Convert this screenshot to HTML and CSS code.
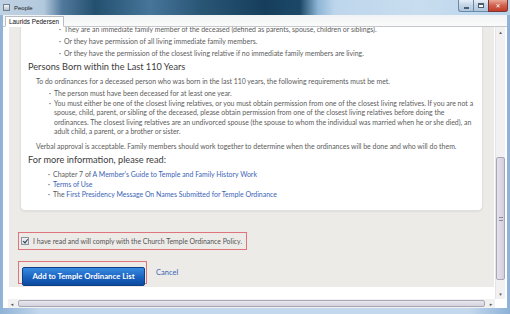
FILE: index.html
```html
<!DOCTYPE html>
<html lang="en">
<head>
    <meta charset="UTF-8">
    <title>People</title>
    <link rel="stylesheet" href="styles.css">
</head>
<body>
<div class="window">
    <div class="titlebar">
        <span class="app-icon"></span>
        <span class="title">People</span>
        <div class="controls">
            <span class="ctl min"><i></i></span>
            <span class="ctl max"><i></i></span>
            <span class="ctl close">&#x2715;</span>
        </div>
    </div>
    <div class="frame">
        <div class="client">
            <div class="tabs">
                <div class="tab">Laurids Pedersen</div>
            </div>
            <div class="viewport">
                <div class="view-row">
                    <div class="view">
                        <div class="page">
                            <div class="card">
                                <ul class="sub-list">
                                    <li>They are an immediate family member of the deceased (defined as parents, spouse, children or siblings).</li>
                                    <li>Or they have permission of all living immediate family members.</li>
                                    <li>Or they have the permission of the closest living relative if no immediate family members are living.</li>
                                </ul>
                                <h3>Persons Born within the Last 110 Years</h3>
                                <p>To do ordinances for a deceased person who was born in the last 110 years, the following requirements must be met.</p>
                                <ul class="rules">
                                    <li>The person must have been deceased for at least one year.</li>
                                    <li>You must either be one of the closest living relatives, or you must obtain permission from one of the closest living relatives. If you are not a spouse, child, parent, or sibling of the deceased, please obtain permission from one of the closest living relatives before doing the ordinances. The closest living relatives are an undivorced spouse (the spouse to whom the individual was married when he or she died), an adult child, a parent, or a brother or sister.</li>
                                </ul>
                                <p class="note">Verbal approval is acceptable. Family members should work together to determine when the ordinances will be done and who will do them.</p>
                                <h3>For more information, please read:</h3>
                                <ul class="links">
                                    <li>Chapter 7 of <a href="#">A Member's Guide to Temple and Family History Work</a></li>
                                    <li><a href="#">Terms of Use</a></li>
                                    <li>The <a href="#">First Presidency Message On Names Submitted for Temple Ordinance</a></li>
                                </ul>
                            </div>

                            <label class="agree marked">
                                <span class="checkbox checked"></span>
                                I have read and will comply with the Church Temple Ordinance Policy.
                            </label>

                            <div class="actions">
                                <div class="marked">
                                    <button class="primary">Add to Temple Ordinance List</button>
                                </div>
                                <a href="#" class="cancel">Cancel</a>
                            </div>
                        </div>
                    </div>
                    <div class="vscroll">
                        <span class="arrow">&#x25B4;</span>
                        <div class="track">
                            <div class="thumb"><i></i></div>
                        </div>
                        <span class="arrow">&#x25BE;</span>
                    </div>
                </div>
                <div class="hscroll">
                    <span class="arrow">&#x25C2;</span>
                    <div class="track">
                        <div class="thumb"></div>
                    </div>
                    <span class="arrow">&#x25B8;</span>
                </div>
            </div>
        </div>
    </div>
</div>
</body>
</html>
```

FILE: styles.css
```css
:root {
    --page-gray: #edebe8;
    --text: #5a5a5a;
    --heading: #3c3c3c;
    --link: #3a64b6;
    --mark: #e0747c;
    --glass: linear-gradient(to right, #c0d3e4 0, #b2c8dc 44px, #52799c 62px, #24506f 95px, #46759a 150px, #2a5676 200px, #163e5c 265px, #1c4868 300px, #8eb6d6 318px, #bed6ec 335px, #c8ddef 420px, #b9d3eb 510px);
}

* {
    box-sizing: border-box;
    margin: 0;
    padding: 0;
}

html,
body {
    background: #b9d0e8;
}

body {
    width: 510px;
    height: 314px;
    overflow: hidden;
    font-family: Lato, 'Liberation Sans', sans-serif;
    color: var(--text);
}

.window {
    width: 510px;
    height: 314px;
    display: flex;
    flex-direction: column;
    background: var(--glass) top left / 510px 15px no-repeat, #b9d0e8;
}

/* Aero title bar */
.titlebar {
    height: 15px;
    flex-shrink: 0;
    display: flex;
    align-items: center;
    padding-left: 3px;
    background-color: #2a5676;
    background-image: var(--glass);
}

.app-icon {
    width: 7px;
    height: 7px;
    border: 1px solid #6f7f8e;
    background: linear-gradient(#f4f6f8, #b8c2cc);
}

.title {
    margin-left: 4px;
    font-family: 'Liberation Sans', sans-serif;
    font-size: 6px;
    color: #1a1a1a;
}

.controls {
    margin-left: auto;
    margin-right: 2px;
    display: flex;
    align-self: flex-start;
}

.ctl {
    height: 12px;
    display: flex;
    align-items: center;
    justify-content: center;
    border: 1px solid #6a88a8;
    border-top: none;
}

.ctl.min,
.ctl.max {
    width: 15px;
    background: linear-gradient(#e6eef6, #c3d4e6 50%, #b0c6dc);
    border-right: none;
}

.ctl.min {
    border-bottom-left-radius: 3px;
}

.ctl.min i {
    width: 5px;
    height: 2px;
    margin-top: 4px;
    background: #f8f8f8;
    border: 1px solid #4d5d6e;
}

.ctl.max i {
    width: 6px;
    height: 5px;
    border: 1px solid #4d5d6e;
    border-top-width: 2px;
    background: #f8f8f8;
}

.ctl.close {
    width: 20px;
    border-color: #7a3530;
    border-bottom-right-radius: 3px;
    background: linear-gradient(#eaa898, #d0604c 50%, #c43c28);
    color: #fff;
    font-size: 6px;
    font-weight: bold;
    font-family: 'DejaVu Sans', sans-serif;
}

.frame {
    flex: 1;
    padding: 0 3px 6px;
    background: linear-gradient(to right, #8fb2d6, #c3d8ec 8%, #c3d8ec 92%, #8db1d8);
}

.client {
    height: 100%;
    display: flex;
    flex-direction: column;
    background: #fff;
}

.tabs {
    height: 12px;
    display: flex;
    align-items: flex-end;
    padding-left: 2px;
    background: linear-gradient(#f2f3f5, #fafafa);
    border-bottom: 1px solid #c4c8cc;
}

.tab {
    height: 11px;
    margin-bottom: -1px;
    padding: 0 4px 0 3px;
    display: flex;
    align-items: center;
    font-family: 'Liberation Sans', sans-serif;
    font-size: 6.4px;
    color: #111;
    background: #fff;
    border: 1px solid #b9bec4;
    border-bottom-color: #fff;
}

.viewport {
    flex: 1;
    display: flex;
    flex-direction: column;
}

.view-row {
    flex: 1;
    display: flex;
}

.view {
    flex: 1;
    padding: 0 1px 12px 6px;
}

.page {
    height: 100%;
    overflow: hidden;
    background: var(--page-gray);
}

/* scrolled terms card */
.card {
    margin: -7px 11px 0;
    padding: 4px 5px 11px 7px;
    background: #fff;
    border: 1px solid #e2e0dc;
    border-radius: 0 0 5px 5px;
    box-shadow: 0 1px 2px rgba(0, 0, 0, 0.06);
    font-size: 6.95px;
    line-height: 9.4px;
}

.card ul {
    list-style: none;
}

.card li::before {
    content: '\00B7';
    display: inline-block;
    width: 5px;
    margin-left: -5px;
    font-weight: bold;
    color: #777;
}

.sub-list {
    padding-left: 36px;
}

.sub-list li + li {
    margin-top: 2.6px;
}

.card h3 {
    margin: 2.8px 0 4.8px;
    font-size: 9.2px;
    line-height: 11px;
    font-weight: normal;
    color: var(--heading);
}

.card p {
    margin-left: 8px;
}

.rules {
    margin-top: 2.6px;
    padding-left: 26px;
}

.rules li + li,
.links li + li {
    margin-top: 0.6px;
}

.card .note {
    margin-top: 5.4px;
}

.links {
    padding-left: 25px;
}

.card a {
    color: var(--link);
    text-decoration: none;
}

/* red annotation boxes */
.marked {
    border: 1px solid var(--mark);
}

.agree {
    width: 229px;
    height: 18px;
    margin: 21px 0 0 9px;
    padding-left: 2px;
    display: flex;
    align-items: center;
    gap: 4px;
    font-size: 6.9px;
    color: #555;
}

.checkbox {
    width: 8px;
    height: 8px;
    border: 1px solid #8a96a4;
    background: linear-gradient(#f0f2f4, #d8dde2);
    position: relative;
}

.checkbox.checked::after {
    content: '';
    position: absolute;
    left: 1.5px;
    top: 0;
    width: 2px;
    height: 4px;
    border: solid #2b3a55;
    border-width: 0 1.5px 1.5px 0;
    transform: rotate(40deg);
}

.actions {
    margin: 11px 0 0 9px;
    display: flex;
    align-items: center;
}

.actions .marked {
    width: 129px;
    height: 23px;
    padding: 1px 1px 1px 3px;
}

.primary {
    width: 123px;
    height: 19px;
    border: 1px solid #0c3f86;
    border-radius: 2px;
    background: linear-gradient(#3a8ae0, #1a62c0 55%, #0c4a9e);
    color: #fff;
    font-family: Lato, 'Liberation Sans', sans-serif;
    font-size: 7.8px;
    font-weight: bold;
    cursor: pointer;
}

.cancel {
    margin-left: 9px;
    font-size: 7.5px;
    color: var(--link);
    text-decoration: none;
}

/* scrollbars */
.vscroll {
    width: 10px;
    margin-right: 2px;
    display: flex;
    flex-direction: column;
    background: #f1f1f1;
    border-left: 1px solid #e6e6e6;
}

.arrow {
    height: 10px;
    display: flex;
    align-items: center;
    justify-content: center;
    font-family: 'DejaVu Sans', sans-serif;
    font-size: 5px;
    color: #555;
}

.vscroll .track {
    flex: 1;
}

.vscroll .thumb {
    height: 123px;
    margin-top: 120px;
    display: flex;
    align-items: center;
    justify-content: center;
    border: 1px solid #a9a6b8;
    border-radius: 2px;
    background: linear-gradient(to right, #e4e2ec, #d2cfdc);
}

.vscroll .thumb i {
    width: 4px;
    height: 4px;
    border-top: 1px solid #8b889a;
    border-bottom: 1px solid #8b889a;
}

.hscroll {
    height: 9px;
    margin: 0 12px 0 5px;
    display: flex;
    align-items: center;
    background: #f1f1f1;
}

.hscroll .arrow {
    width: 8px;
    height: 8px;
}

.hscroll .track {
    flex: 1;
    padding: 0 2px;
}

.hscroll .thumb {
    height: 7px;
    border: 1px solid #a9a6b8;
    border-radius: 2px;
    background: linear-gradient(#e8e7ee, #d4d2dc);
}
```
